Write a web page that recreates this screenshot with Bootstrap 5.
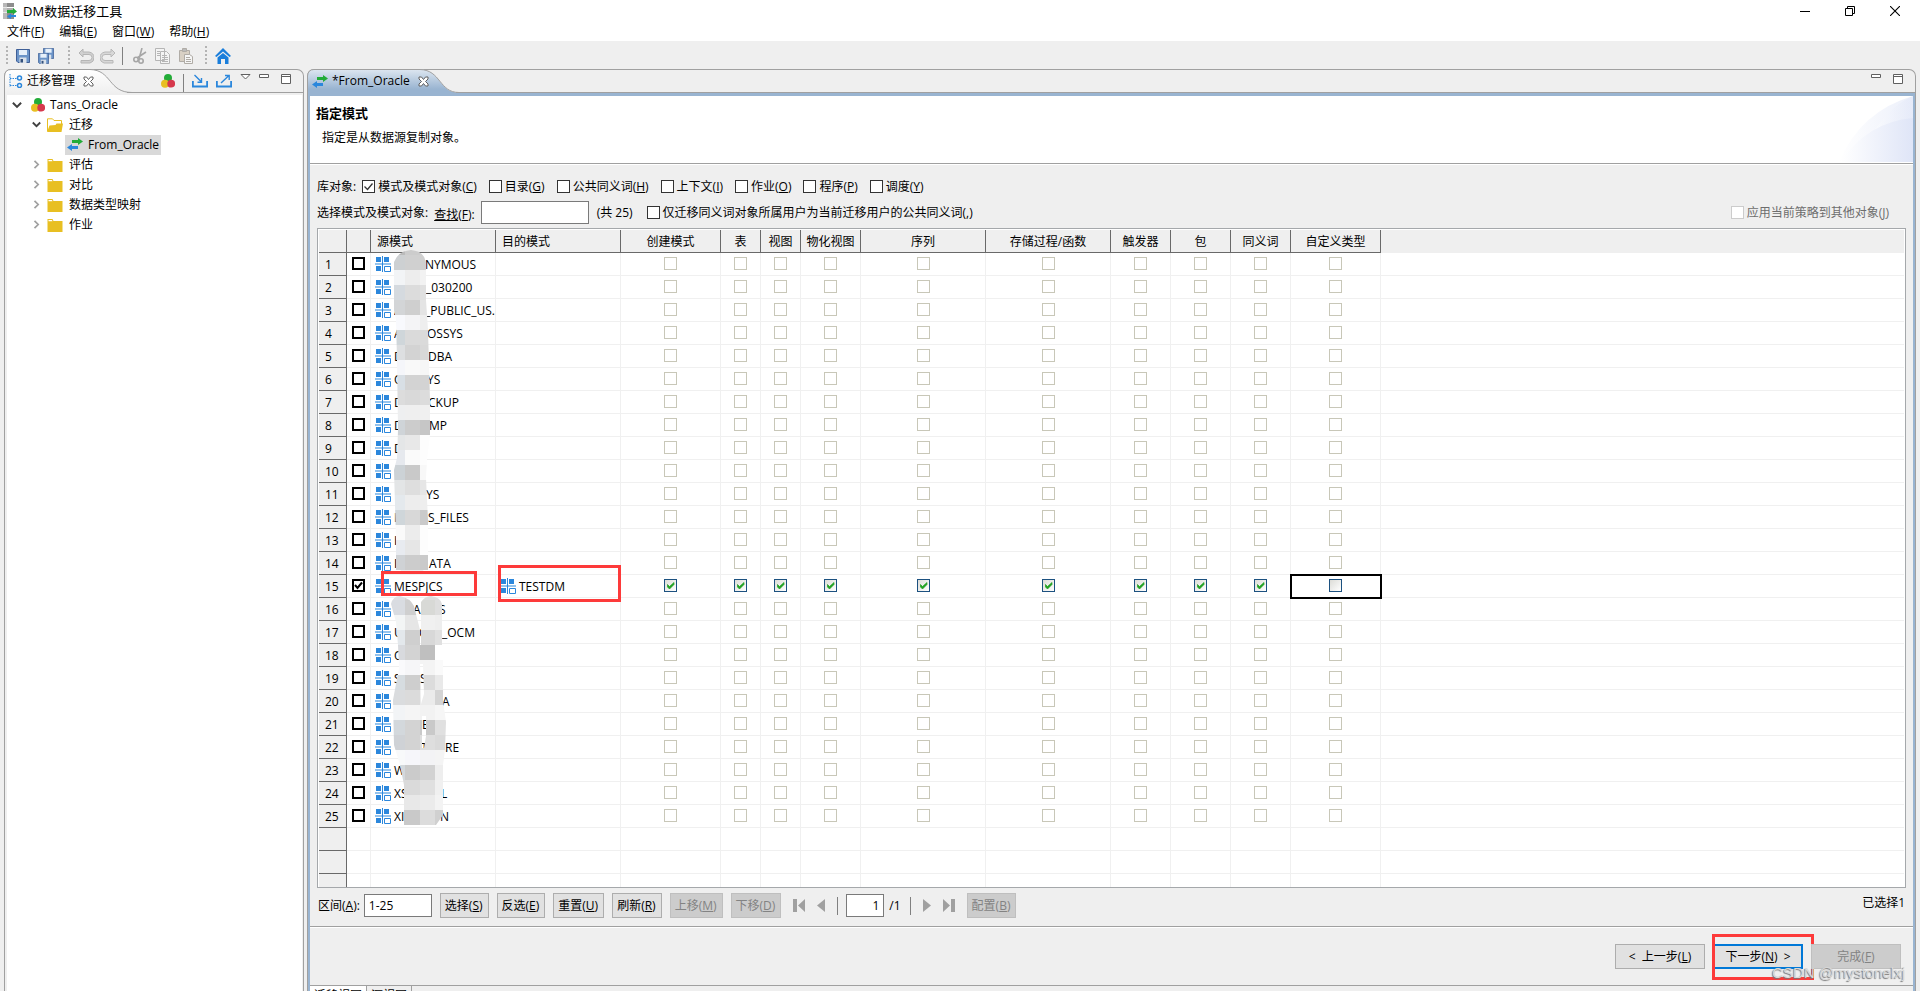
<!DOCTYPE html>
<html lang="zh-CN">
<head>
<meta charset="utf-8">
<meta name="viewport" content="width=device-width, initial-scale=1">
<title>DM数据迁移工具</title>
<link rel="stylesheet" href="https://cdn.jsdelivr.net/npm/bootstrap@5.3.0/dist/css/bootstrap.min.css">
<style>
  :root { --face:#efefef; --line:#a0a0a0; --blue:#99b4d1; --grid:#f0f0f0; --dark:#696969; --red:#fd3a3a; }
  body { font-family:"Open Sans","Noto Sans CJK SC",sans-serif; font-size:12px; line-height:20px; color:#000; background:var(--face); }
  svg { display:block; flex:none; }
  button, input { font-family:inherit; font-size:12px; color:#000; }
  .sp6 { margin-left:6px; } .sp8 { margin-left:8px; } .sp10 { margin-left:10px; } .sp12 { margin-left:12px; } .sp14 { margin-left:14px; }
  .app { height:100vh; overflow:hidden; }
  .titlebar { height:22px; padding:0 20px 0 3px; background:#fff; }
  .titlebar .app-name { font-size:13px; }
  .win-btns { gap:35px; }
  .menubar { height:19px; padding:2px 0 0 7px; gap:15px; background:#fff; }
  .menubar a { color:#000; text-decoration:none; line-height:20px; }
  .bare { border:0; background:none; padding:0; display:block; }
  .toolbar { height:28px; padding:2px 0 0 6px; }
  .grip { width:2px; height:20px; background:repeating-linear-gradient(#b4b4b4 0 2px,transparent 2px 4px); }
  .vbar { width:1px; height:18px; background:#808080; }
  .workarea { padding:0 4px; gap:3px; min-height:0; }
  .pane { border:1px solid var(--line); border-bottom:0; border-radius:7px 7px 0 0; min-width:0; }
  .pane-left { width:300px; flex:none; padding:0 1px 0 2px; }
  .pane-head { height:23px; }
  .pane-left .pane-head { margin:0 -1px 0 -2px; }
  .tab-shape { position:absolute; left:-1px; top:-1px; z-index:0; }
  .pane-head > :not(.tab-shape) { position:relative; z-index:1; }
  .head-line { border-bottom:1px solid var(--line); }
  .view-tools { padding-right:12px; }
  .tree { background:#fff; margin-top:2px; list-style:none; padding:0; margin-bottom:0; }
  .tree li { height:20px; gap:5px; }
  .tree .picked { background:#d9d9d9; gap:5px; padding:0 2px; height:20px; }
  .lvl0 { padding-left:5px; } .tree .lvl1 { padding-left:25px; gap:6px; } .lvl2 { padding-left:58px; }
  .pane-body { border:solid var(--blue); border-width:3px 2px 0; min-height:0; }
  .banner { height:67px; background:#fff; padding:7px 0 0 6px; }
  .banner h1 { font-size:13px; line-height:20px; font-weight:700; margin:0 0 5px; }
  .banner p { margin:0 0 0 6px; }
  .swoosh { position:absolute; right:0; top:0; }
  .rule { height:2px; flex:none; background:#fff; border-top:1px solid var(--line); }
  .form-line { padding-left:7px; }
  .form-line label { display:flex; align-items:center; gap:3px; white-space:nowrap; }
  .box { appearance:none; width:13px; height:13px; margin:0; border:1px solid #333; background:#fff center/11px 11px no-repeat; flex:none; display:block; }
  .box:checked { background-image:url("data:image/svg+xml,%3Csvg xmlns='http://www.w3.org/2000/svg' viewBox='0 0 11 11'%3E%3Cpath d='M1.5 5.5l3 3 5-6' fill='none' stroke='%23333' stroke-width='1.3'/%3E%3C/svg%3E"); }
  .box:disabled { border-color:#ccc; }
  .off { color:#6d6d6d; }
  .field { border:1px solid #7a7a7a; background:#fff; padding:0 4px; height:23px; border-radius:0; outline:0; }
  .sheet-wrap { margin:3px 7px 0; border:1px solid #a5a8ab; background:#fff; padding:1px; overflow:hidden; min-height:0; }
  .sheet { width:100%; table-layout:fixed; border-collapse:separate; border-spacing:0; background:#fff; }
  .sheet th { height:23px; padding:2px 0 0; font-weight:400; text-align:center; background:var(--face); border-right:1px solid var(--dark); border-bottom:1px solid var(--dark); line-height:20px; white-space:nowrap; }
  .sheet thead th.start { text-align:left; padding-left:6px; }
  .sheet thead th:last-child { border-color:var(--face); }
  .sheet tbody th { text-align:left; padding:2px 0 0 6px; }
  .sheet td { height:23px; padding:0; border-right:1px solid var(--grid); border-bottom:1px solid var(--grid); line-height:20px; overflow:hidden; white-space:nowrap; }
  .sheet td:last-child { border-right:0; }
  .sheet td .box { margin:0 auto; border-color:#c8c7b8; }
  .sheet td .pick { border:2px solid #000; }
  .sheet td .pick:checked { background-image:url("data:image/svg+xml,%3Csvg xmlns='http://www.w3.org/2000/svg' viewBox='0 0 11 11'%3E%3Cpath d='M2 5l2.500 3 4.500-5.500' fill='none' stroke='%23000' stroke-width='2'/%3E%3C/svg%3E"); }
  .sheet .live .box:not(.pick) { border-color:#1c5180; background-image:linear-gradient(135deg,#dcdcd7,#fff); }
  .sheet .live .box:not(.pick):checked { background-image:url("data:image/svg+xml,%3Csvg xmlns='http://www.w3.org/2000/svg' viewBox='0 0 11 11'%3E%3Cpath d='M2.500 4.500v2.500l2 2 4.500-4.500V2.500L4.500 6.500z' fill='%2321a121' stroke='%2321a121' stroke-width='.7'/%3E%3C/svg%3E"),linear-gradient(135deg,#dcdcd7,#fff); }
  .sheet .current { outline:2px solid #000; outline-offset:-1px; position:relative; }
  .schema { padding-left:4px; gap:3px; height:22px; }
  .schema .chunk { display:inline-block; padding-top:2px; height:22px; }
  .overlay { position:absolute; left:0; top:0; pointer-events:none; }
  .pager { height:38px; padding:5px 8px 8px 8px; }
  .push { height:25px; border:1px solid #adadad; background:#e1e1e1; padding:0 4px; line-height:22px; white-space:nowrap; }
  .pager .push { padding-right:5px; }
  .push:disabled { background:#ccc; border-color:#bfbfbf; color:#838383; }
  .gap8 { gap:8px; }
  .page-no { margin:0 -3px; }
  .wizard { height:57px; padding:16px 12px 16px 0; }
  .wizard .push { width:90px; }
  .wizard .next { border:2px solid #0078d7; line-height:20px; }
  .frame-next { position:absolute; left:-1px; top:-10px; width:102px; height:46px; border:3px solid var(--red); pointer-events:none; }
  .watermark { position:absolute; right:-4px; top:19px; font:15px/20px "Liberation Sans",sans-serif; color:#d8d8d8; text-shadow:-1px 1px 1px #777; white-space:nowrap; }
  .page-tabs { height:6px; border-top:1px solid var(--line); overflow:hidden; flex:none; }
  .page-tabs span { padding:0 4px; border-right:1px solid var(--line); height:20px; }
  .page-tabs span:first-child { background:#fff; margin-top:-1px; padding-top:1px; }
</style>
</head>
<body>
<svg width="0" height="0" class="position-absolute" aria-hidden="true">
  <defs>
    <symbol id="i-swap" viewBox="0 0 16 13"><path d="M5 2h6V0l5 3.500L11 7V5H5z" fill="#22ac38"/><path d="M11 8H5V6L0 9.500 5 13v-2h6z" fill="#2b87dc"/></symbol>
    <symbol id="i-balls" viewBox="0 0 14 14"><circle cx="7" cy="4" r="4" fill="#22ac38"/><circle cx="4" cy="9.700" r="4" fill="#e8bf22"/><circle cx="10.200" cy="9.700" r="3.900" fill="#d6384c"/></symbol>
    <symbol id="i-folder" viewBox="0 0 16 14"><path d="M.5 1h5l1 2h9v11H.5z" fill="#e8bf22"/><path d="M1.500 2h3.500l.5 1.200H1.500z" fill="#fff"/></symbol>
    <symbol id="i-folder-open" viewBox="0 0 16 14"><path d="M.5 13V.8h5L7 2.500h7.500V7" fill="none" stroke="#e8bf22"/><path d="M0 14l2.500-6.500 6-.5 1-1.500H16L14.500 14z" fill="#e8bf22"/></symbol>
    <symbol id="i-down" viewBox="0 0 9 9"><path d="M.8 2.500l3.700 3.700 3.700-3.700" fill="none" stroke="#404040" stroke-width="1.800"/></symbol>
    <symbol id="i-right" viewBox="0 0 9 9"><path d="M2.500.8l3.700 3.700-3.700 3.700" fill="none" stroke="#a0a0a0" stroke-width="1.700"/></symbol>
    <symbol id="i-schema" viewBox="0 0 16 16"><path d="M1 1h5v5H1zM9 1h5v5H9zM1 10h5v5H1zM7 0h1v16H7zM0 7.500h16v1H0z" fill="#2b87dc"/><path d="M9.500 10.500h6v5h-6z" fill="#fff" stroke="#2b87dc"/></symbol>
    <symbol id="i-x" viewBox="0 0 11 11"><path d="M1 1h2.500l2 2.500 2-2.500H10v2L7.500 5.500 10 8v2H7.500l-2-2.500-2 2.500H1V8l2.500-2.500L1 3z" fill="#fff" stroke="#606060"/></symbol>
    <symbol id="i-min" viewBox="0 0 10 4"><path d="M.5.5h9v3h-9z" fill="#fff" stroke="#606060"/></symbol>
    <symbol id="i-max" viewBox="0 0 10 10"><path d="M.5.5h9v9h-9zM.5 2.500h9" fill="#fff" stroke="#606060"/></symbol>
    <symbol id="i-disk" viewBox="0 0 14 14"><path d="M.5.5h13v13H2l-1.500-1.500z" fill="#6b94c8" stroke="#3f5f97"/><path d="M3 1h8v5H3z" fill="#e6f0fa"/><path d="M3.500 8.500h7V14h-7z" fill="#dbe2ea"/><path d="M4.500 10h2.500v3.500H4.500z" fill="#33507c"/></symbol>
  </defs>
</svg>

<div class="app d-flex flex-column">
  <header class="titlebar d-flex align-items-center">
    <svg width="14" height="16" viewBox="0 0 14 16"><path d="M0 0h11v4H0z" fill="#8d8d8d"/><path d="M0 5h11v4H0z" fill="#b0b0b0"/><path d="M0 10h11v6H0z" fill="#8d8d8d"/><path d="M0 0h4v16H0z" fill="#d5d5d5" opacity=".6"/><path d="M4 7h6V5l4 3.500-4 3V10H4z" fill="#22ac38"/><path d="M13 12H8v-1.500L4 13.500 8 16v-2h5z" fill="#2b87dc"/></svg>
    <span class="app-name sp6 flex-grow-1">DM数据迁移工具</span>
    <div class="win-btns d-flex align-items-center">
      <button class="bare" aria-label="最小化"><svg width="10" height="10"><path d="M0 5.500h10" stroke="#000"/></svg></button>
      <button class="bare" aria-label="还原"><svg width="10" height="10"><path d="M.5 2.500h7v7h-7zM2.500 2.500v-2h7v7h-2" fill="none" stroke="#000"/></svg></button>
      <button class="bare" aria-label="关闭"><svg width="10" height="10"><path d="M0 0l10 10M10 0L0 10" stroke="#000" stroke-width="1.100"/></svg></button>
    </div>
  </header>
  <nav class="menubar d-flex align-items-center">
    <a href="#">文件(<u>F</u>)</a><a href="#">编辑(<u>E</u>)</a><a href="#">窗口(<u>W</u>)</a><a href="#">帮助(<u>H</u>)</a>
  </nav>
  <div class="toolbar d-flex align-items-center flex-shrink-0" role="toolbar">
    <span class="grip"></span>
    <button class="bare sp8" aria-label="保存"><svg width="14" height="14"><use href="#i-disk"/></svg></button>
    <button class="bare sp8" aria-label="全部保存"><svg width="16" height="16"><use href="#i-disk" x="5" y="0" width="11" height="11"/><use href="#i-disk" x="0" y="5" width="11" height="11"/></svg></button>
    <span class="grip sp14"></span>
    <button class="bare sp8" aria-label="撤销"><svg width="16" height="16"><path d="M5 1L1 5l4 4V6.500h6q3 0 3 3t-3 3H3V15h9q4-1 4-5.500T11 4H5z" fill="#d0d0d0" stroke="#b5b5b5"/></svg></button>
    <button class="bare sp6" aria-label="重做"><svg width="16" height="16"><path d="M11 1l4 4-4 4V6.500H5q-3 0-3 3t3 3h8V15H4Q0 14 0 9.500T5 4h6z" fill="#d8d8d8" stroke="#b8b8b8"/></svg></button>
    <span class="vbar sp6"></span>
    <button class="bare sp10" aria-label="剪切"><svg width="14" height="16" fill="none" stroke="#a6a6a6" stroke-width="1.600"><path d="M9 0L6 11M13 4L4 10"/><circle cx="3" cy="11.500" r="2.200"/><circle cx="8" cy="13" r="2.200"/></svg></button>
    <button class="bare sp8" aria-label="复制"><svg width="16" height="16" fill="#f4f4f4" stroke="#b5b5b5"><path d="M.5.5h9v12h-9zM5.500 3.500h6l3 3v9h-9z"/><path d="M7 7.500h5M7 9.500h6M7 11.500h6M7 13.500h6M2 3.500h3M2 5.500h3M2 7.500h3"/></svg></button>
    <button class="bare sp8" aria-label="粘贴"><svg width="14" height="16" fill="#d8d0c4" stroke="#b0aca6"><path d="M.5 2.500h10v11H.5z"/><path d="M3.500.5h4v3h-4z" fill="#bbb"/><path d="M5.500 6.500h5l3 2v7h-8z" fill="#f6f6f6"/><path d="M7 9.500h4M7 11.500h5M7 13.500h5"/></svg></button>
    <span class="grip sp12"></span>
    <button class="bare sp8" aria-label="主页"><svg width="16" height="16"><path d="M8 0l8 8-1.500 1L8 3.500 1.500 9 0 8z" fill="#1a7edb"/><path d="M2.500 9.500L8 5l5.500 4.500V16H10v-5H6v5H2.500z" fill="#1a7edb"/></svg></button>
  </div>

  <div class="workarea d-flex flex-grow-1">
    <aside class="pane pane-left">
      <div class="pane-head position-relative d-flex">
        <svg class="tab-shape" width="128" height="25"><defs><linearGradient id="gw" x2="0" y2="1"><stop stop-color="#fff"/><stop offset="1" stop-color="#efefef"/></linearGradient></defs><path d="M.5 25V7Q1 .5 7 .5H86C108 1 104 23.500 127 23.500V25z" fill="url(#gw)"/><path d="M.5 25V7Q1 .5 7 .5H86C108 1 104 23.500 128 23.500" fill="none" stroke="#a0a0a0"/></svg>
        <div class="d-flex align-items-center ps-1" style="width:122px">
          <svg width="14" height="14" class="me-1"><path d="M1 0v13M1 4.500h7M1 11.500h7" stroke="#2b87dc" stroke-dasharray="1.500 1" fill="none"/><circle cx="10.500" cy="4" r="2" fill="none" stroke="#2b87dc" stroke-width="1.500"/><circle cx="10.500" cy="11.500" r="2" fill="none" stroke="#2b87dc" stroke-width="1.500"/></svg>
          <span class="me-2">迁移管理</span>
          <button class="bare" aria-label="关闭视图"><svg width="11" height="11"><use href="#i-x"/></svg></button>
        </div>
        <div class="head-line view-tools flex-grow-1 d-flex justify-content-end">
          <button class="bare align-self-center" aria-label="数据源"><svg width="14" height="14"><use href="#i-balls"/></svg></button>
          <span class="vbar mt-1 sp8"></span>
          <button class="bare align-self-center sp8" aria-label="导入"><svg width="16" height="14" fill="none" stroke="#2b87dc"><path d="M.9 7v5.500h14.200V7" stroke-width="1.800"/><path d="M2.500 1l7 7M9.500 4v4.200H5.500" stroke-width="1.400"/></svg></button>
          <button class="bare align-self-center sp8" aria-label="导出"><svg width="16" height="14" fill="none" stroke="#2b87dc"><path d="M.9 7v5.500h14.200V7" stroke-width="1.800"/><path d="M5 9l8-7.500M9 1.500h4.200V6" stroke-width="1.400"/></svg></button>
          <button class="bare align-self-start mt-1 sp8" aria-label="视图菜单"><svg width="11" height="6"><path d="M1 .5h9L5.500 5z" fill="#fff" stroke="#606060"/></svg></button>
          <button class="bare align-self-start mt-1 sp8" aria-label="最小化视图"><svg width="10" height="4"><use href="#i-min"/></svg></button>
          <button class="bare align-self-start mt-1 sp12" aria-label="最大化视图"><svg width="10" height="10"><use href="#i-max"/></svg></button>
        </div>
      </div>
      <ul class="tree h-100">
        <li class="lvl0 d-flex align-items-center"><svg width="10" height="10"><use href="#i-down"/></svg><svg width="14" height="14" class="ms-1"><use href="#i-balls"/></svg>Tans_Oracle</li>
        <li class="lvl1 d-flex align-items-center"><svg width="9" height="9"><use href="#i-down"/></svg><svg width="16" height="14"><use href="#i-folder-open"/></svg>迁移</li>
        <li class="lvl2 d-flex"><span class="picked d-flex align-items-center"><svg width="16" height="13"><use href="#i-swap"/></svg>From_Oracle</span></li>
        <li class="lvl1 d-flex align-items-center"><svg width="9" height="9"><use href="#i-right"/></svg><svg width="16" height="14"><use href="#i-folder"/></svg>评估</li>
        <li class="lvl1 d-flex align-items-center"><svg width="9" height="9"><use href="#i-right"/></svg><svg width="16" height="14"><use href="#i-folder"/></svg>对比</li>
        <li class="lvl1 d-flex align-items-center"><svg width="9" height="9"><use href="#i-right"/></svg><svg width="16" height="14"><use href="#i-folder"/></svg>数据类型映射</li>
        <li class="lvl1 d-flex align-items-center"><svg width="9" height="9"><use href="#i-right"/></svg><svg width="16" height="14"><use href="#i-folder"/></svg>作业</li>
      </ul>
    </aside>

    <main class="pane flex-grow-1 d-flex flex-column">
      <div class="pane-head position-relative d-flex flex-shrink-0">
        <svg class="tab-shape" width="152" height="25"><defs><linearGradient id="gb" x2="0" y2="1"><stop stop-color="#dde6f0"/><stop offset=".8" stop-color="#99b4d1"/></linearGradient></defs><path d="M.5 25V7Q1 .5 7 .5H113C134 1 132 23.500 151 23.500V25z" fill="url(#gb)"/><path d="M.5 25V7Q1 .5 7 .5H113C134 1 132 23.500 152 23.500" fill="none" stroke="#a0a0a0"/></svg>
        <div class="d-flex align-items-center" style="width:148px">
          <svg width="16" height="13" class="ms-1 me-1"><use href="#i-swap"/></svg>
          <span class="me-2">*From_Oracle</span>
          <button class="bare" aria-label="关闭"><svg width="11" height="11"><use href="#i-x"/></svg></button>
        </div>
        <div class="head-line view-tools flex-grow-1 d-flex justify-content-end">
          <button class="bare align-self-start mt-1" aria-label="最小化"><svg width="10" height="4"><use href="#i-min"/></svg></button>
          <button class="bare align-self-start mt-1 sp12" aria-label="最大化"><svg width="10" height="10"><use href="#i-max"/></svg></button>
        </div>
      </div>
      <div class="pane-body flex-grow-1 d-flex flex-column position-relative">
        <section class="banner position-relative flex-shrink-0">
          <h1>指定模式</h1>
          <p>指定是从数据源复制对象。</p>
          <svg class="swoosh" width="74" height="66"><defs><linearGradient id="gs"><stop stop-color="#fff"/><stop offset="1" stop-color="#dfe5f7"/></linearGradient></defs><path d="M0 66Q22 15 74 0V66z" fill="url(#gs)" opacity=".6"/><path d="M32 40Q50 10 74 0V66H32z" fill="url(#gs)" opacity=".5"/><path d="M2 66Q28 26 74 22V66z" fill="url(#gs)"/></svg>
        </section>
        <div class="rule"></div>

        <div class="form-line d-flex align-items-center mt-2 pt-1">
          <span>库对象:</span>
          <div class="d-flex sp6" style="gap:12px">
            <label><input type="checkbox" class="box" checked><span>模式及模式对象(<u>C</u>)</span></label>
            <label><input type="checkbox" class="box"><span>目录(<u>G</u>)</span></label>
            <label><input type="checkbox" class="box"><span>公共同义词(<u>H</u>)</span></label>
            <label><input type="checkbox" class="box"><span>上下文(<u>I</u>)</span></label>
            <label><input type="checkbox" class="box"><span>作业(<u>O</u>)</span></label>
            <label><input type="checkbox" class="box"><span>程序(<u>P</u>)</span></label>
            <label><input type="checkbox" class="box"><span>调度(<u>Y</u>)</span></label>
          </div>
        </div>
        <div class="form-line d-flex align-items-center pt-1">
          <span>选择模式及模式对象:</span>
          <label for="find" class="sp6 pt-1"><span><u>查找</u>(<u>F</u>):</span></label>
          <input id="find" type="text" class="field sp6" style="width:108px">
          <span class="sp8">(共 25)</span>
          <label class="flex-grow-1 sp14"><input type="checkbox" class="box"><span>仅迁移同义词对象所属用户为当前迁移用户的公共同义词(<u>,</u>)</span></label>
          <label class="off pe-4"><input type="checkbox" class="box" disabled><span>应用当前策略到其他对象(<u>J</u>)</span></label>
        </div>

        <div class="sheet-wrap flex-grow-1">
          <div class="position-relative">
            <table class="sheet">
              <colgroup><col style="width:28px"><col style="width:24px"><col style="width:125px"><col style="width:125px"><col style="width:100px"><col style="width:40px"><col style="width:40px"><col style="width:60px"><col style="width:125px"><col style="width:125px"><col style="width:60px"><col style="width:60px"><col style="width:60px"><col style="width:90px"><col></colgroup>
              <thead><tr><th></th><th></th><th class="start">源模式</th><th class="start">目的模式</th><th>创建模式</th><th>表</th><th>视图</th><th>物化视图</th><th>序列</th><th>存储过程/函数</th><th>触发器</th><th>包</th><th>同义词</th><th>自定义类型</th><th></th></tr></thead>
              <tbody id="rows"></tbody>
            </table>
            <svg class="overlay" id="overlay" width="320" height="620" viewBox="319 230 320 620" aria-hidden="true">
              <defs>
                <clipPath id="smear-top"><path d="M394 262Q398 251 411 250Q424 251 426 262V300L428 330 430 400V435L427 460 426 478 428 520V570H424Q411 580 400 570H396V540L394 470 397 458 398 430 397 360 396 320 394 310z"/></clipPath>
                <clipPath id="smear-low"><path clip-rule="evenodd" d="M391 604Q393 596 400 596Q410 598 414 606L420 630V645H421V602Q425 596 431 596Q440 597 442 604V645H435V660H443V700L446 722 445 750 443 765V815L436 825H404V785L400 765 394 745 393 700 399 668 398 645 396 622zM420 664h3l1 30-3 10zM422 716h4v20l-2 12h-2z"/></clipPath>
              </defs>
              <g id="smear-top-cells" clip-path="url(#smear-top)"></g>
              <g id="smear-low-cells" clip-path="url(#smear-low)"></g>
              <path d="M382.500 572.500h93v22h-93zM499.500 566.500h120v34h-120z" fill="none" stroke="#fd3a3a" stroke-width="3"/>
            </svg>
          </div>
        </div>

        <div class="pager d-flex align-items-start flex-shrink-0">
          <div class="d-flex align-items-center gap8 flex-grow-1">
            <div class="d-flex align-items-center"><label for="range" class="me-1">区间(<u>A</u>):</label><input id="range" class="field" style="width:68px" value="1-25"></div>
            <button class="push">选择(<u>S</u>)</button>
            <button class="push">反选(<u>E</u>)</button>
            <button class="push">重置(<u>U</u>)</button>
            <button class="push">刷新(<u>R</u>)</button>
            <button class="push" disabled>上移(<u>M</u>)</button>
            <button class="push" disabled>下移(<u>D</u>)</button>
            <button class="bare ms-1 me-1" aria-label="首页"><svg width="12" height="13" fill="#a0a0a0"><path d="M0 0h4v13H0zM12 0v13L5 6.500z"/></svg></button>
            <button class="bare" aria-label="上一页"><svg width="8" height="13" fill="#a0a0a0"><path d="M8 0v13L0 6.500z"/></svg></button>
            <span class="vbar ms-1"></span>
            <input class="field text-end" style="width:38px" value="1" aria-label="页码">
            <span class="page-no">/1</span>
            <span class="vbar ms-1 me-1"></span>
            <button class="bare me-1" aria-label="下一页"><svg width="8" height="13" fill="#a0a0a0"><path d="M0 0v13l8-6.500z"/></svg></button>
            <button class="bare me-1" aria-label="末页"><svg width="12" height="13" fill="#a0a0a0"><path d="M0 0v13l7-6.500zM8 0h4v13H8z"/></svg></button>
            <button class="push" disabled>配置(<u>B</u>)</button>
          </div>
          <span>已选择1</span>
        </div>
        <div class="rule"></div>
        <div class="wizard d-flex justify-content-end gap8 flex-shrink-0">
          <button class="push">&lt;&nbsp; 上一步(<u>L</u>)</button>
          <div class="position-relative"><button class="push next">下一步(<u>N</u>)&nbsp; &gt;</button><div class="frame-next"></div></div>
          <div class="position-relative"><button class="push" disabled>完成(<u>F</u>)</button><span class="watermark">CSDN @mystonelxj</span></div>
        </div>
        <div class="page-tabs d-flex"><span>迁移视图</span><span>源视图</span></div>
      </div>
    </main>
  </div>
</div>

<script src="https://cdn.jsdelivr.net/npm/bootstrap@5.3.0/dist/js/bootstrap.bundle.min.js"></script>
<script>
  // Each schema name is a list of [offset, text] pieces; the gaps are redacted.
  const schemas = [
    [[0,'A'],[31,'NYMOUS']], [[32,'_030200']], [[0,'A'],[31,'_PUBLIC_US.']], [[0,'A'],[33,'OSSYS']],
    [[0,'D'],[34,'DBA']], [[0,'O'],[33,'YS']], [[0,'D'],[34,'CKUP']], [[0,'D'],[35,'MP']],
    [[0,'D']], [], [[32,'YS']], [[0,'I'],[34,'S_FILES']], [[0,'I']], [[0,'I'],[35,'ATA']],
    [[0,'MESPJCS']], [[19,'AP'],[45,'S']], [[0,'U'],[25,'C'],[48,'_OCM']], [[0,'O'],[27,'J']],
    [[0,'S'],[26,'S']], [[48,'A']], [[28,'E']], [[27,'T'],[51,'RE']], [[0,'W']],
    [[0,'XS'],[47,'L']], [[0,'XI'],[46,'N']]
  ];
  const heads = ['创建模式','表','视图','物化视图','序列','存储过程/函数','触发器','包','同义词','自定义类型'];
  const icon = '<svg width="16" height="16"><use href="#i-schema"/></svg>';
  const name = parts => {
    if (parts.length && parts[0][0] > 0) parts = [[0,''], ...parts];
    return parts.map(([x, t], i) => i + 1 < parts.length
      ? `<span class="chunk overflow-hidden" style="width:${parts[i + 1][0] - x}px">${t}</span>` : `<span class="chunk">${t}</span>`).join('');
  };
  let html = '';
  schemas.forEach((parts, i) => {
    const on = i === 14;
    html += `<tr class="${on ? 'live' : ''}"><th scope="row">${i + 1}</th>`
      + `<td><input type="checkbox" class="box pick" aria-label="选择第${i + 1}行"${on ? ' checked' : ''}></td>`
      + `<td><div class="schema d-flex align-items-center">${icon}<div class="d-flex">${name(parts)}</div></div></td>`
      + `<td>${on ? `<div class="schema d-flex align-items-center">${icon}<span class="chunk">TESTDM</span></div>` : ''}</td>`
      + heads.map((h, c) => `<td class="${on && c === 9 ? 'current' : ''}"><input type="checkbox" class="box" aria-label="${h}"${on && c < 9 ? ' checked' : ''}></td>`).join('')
      + '<td></td></tr>';
  });
  html += ('<tr><th></th>' + '<td></td>'.repeat(14) + '</tr>').repeat(3);
  document.getElementById('rows').innerHTML = html;

  // Redaction mosaic: 15px cells, one colour row per step.
  const mosaic = (id, y0, rows) => {
    document.getElementById(id).innerHTML = rows.map((r, j) => r.split(' ').map((c, i) =>
      `<rect x="${390 + i * 15}" y="${y0 + j * 15}" width="15" height="15" fill="#${c}"/>`).join('')).join('');
  };
  mosaic('smear-top-cells', 240, ['bbbbbb cccccc d0d0d0','cdd0d2 d0d0d0 d0d0d0','f2f4f6 ededed f2f2f2','d5dadf dcdcdc e0e0e0','d3d5d7 cfcfcf e4e4e4','f8f9fd f4f4f6 eeeeee','cfd6da dadada dadada','dddfe1 d3d3d3 d8d8d8','f5f6fa f9f9f9 f6f6f6','d8dfe5 d3d3d3 d3d3d3','dcdcdc d9d9d9 dcdcdc','eeeff0 efefef f0f0f0','cfd4d8 cccccc c6c6c6','e4e6e7 e8e8e8 fdfdfd','e6e9ee fafafa fdfdfd','ccd2d6 c9c9c9 f8f8f8','e3e5e6 dedede e6e6e6','e4e9ed ededed eeeeee','cfd6da d8d8d8 cacaca','fafafa ececec fdfdfd','e8ebf0 e6e6e6 fdfdfd','cfd2d5 cccccc cacaca','eeeeee eeeeee eeeeee']);
  mosaic('smear-low-cells', 585, ['dfe0e4 d6d6d6 dddddd dedede','d9dce1 cfcfcf d8d9d6 dedede','f3f5f5 e6e6e6 f0f0f0 eeeeee','e3e8ec cfcfcf d8d8d8 e0e0e0','d8dade d3d3d3 bfbfbf ffffff','fafafc f6f6f8 f4f4f4 fafafa','d6dce0 cecece dcdcdc e9e9e9','dadcde dbdbdb ebebeb d4d4d4','f2f4f6 f5f5f5 f2f2f2 f6f6f6','d3d8dc d3d3d3 c9c9c9 e0e0e0','cfd2d6 d3d3d3 dedede dadada','f8f9fa f6f6fa f3f3f5 f4f4f4','d3d8dc cbcbcb d2d2d2 eeeeee','dadada dadada e0e0e0 f0f0f0','e8e8e8 e8e8e8 ebebeb f3f3f3','c9c9c9 c9c9c9 dcdcdc d0d0d0']);
</script>
</body>
</html>
